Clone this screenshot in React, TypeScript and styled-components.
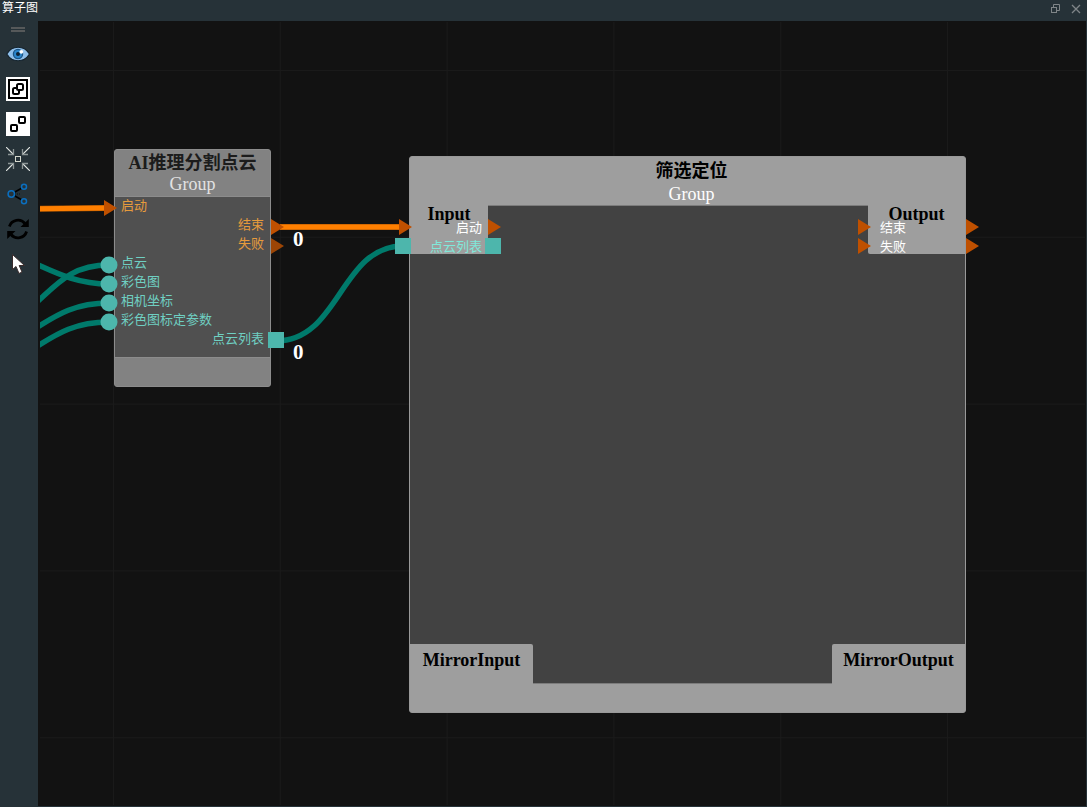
import React from "react";
import styled, { createGlobalStyle } from "styled-components";

const Global = createGlobalStyle`
  *, *::before, *::after { box-sizing: border-box; }
  body { margin: 0; background: #121212; }
  button { border: 0; padding: 0; background: none; color: inherit; font: inherit; }
`;

const SANS = `"Noto Sans CJK SC", "Noto Sans", sans-serif`;
const SERIF = `"Liberation Serif", "Noto Sans CJK SC", serif`;

const Window = styled.div`
  display: flex;
  flex-direction: column;
  height: 100vh;
  background: #263238;
  font-family: ${SANS};
`;

const TitleBar = styled.header`
  display: flex;
  justify-content: space-between;
  align-items: flex-start;
  height: 21px;
  padding: 0 4px 0 2px;
  background: #263238;
`;

const WindowTitle = styled.h1`
  margin: 0;
  font-size: 12px;
  line-height: 13px;
  font-weight: 400;
  color: #fff;
`;

const WindowControls = styled.div`
  display: flex;
  gap: 7px;
  padding-top: 2px;
`;

const ControlButton = styled.button`
  width: 14px;
  height: 14px;
  svg { display: block; }
`;

const Main = styled.div`
  display: flex;
  flex: 1;
  min-height: 0;
`;

const ToolBar = styled.nav`
  display: flex;
  flex-direction: column;
  align-items: center;
  width: 38px;
  padding: 6px 2px 0 0;
  background: #263238;
`;

const Handle = styled.div`
  width: 14px;
  height: 5px;
  margin-bottom: 10px;
  border: solid #56595a;
  border-width: 2px 0;
`;

const ToolButton = styled.button`
  width: 24px;
  height: 24px;
  margin-bottom: 11px;
  svg { display: block; }
`;

const Canvas = styled.main`
  flex: 1;
  min-width: 0;
  padding: 1px;
  background: #121212;
  border: solid #263238;
  border-width: 0 1px 1px 0;
`;

const Viewport = styled.div`
  position: relative;
  height: 100%;
  margin-left: 1px;
  overflow: hidden;
`;

/* Scene coordinates start above and left of the visible part of the graph. */
const Scene = styled.div`
  position: absolute;
  inset: -22px 0 0 -40px;
`;

const Layer = styled.svg`
  position: absolute;
  inset: 0;
  width: 100%;
  height: 100%;
  pointer-events: none;
`;

const Node = styled.section<{ $x: number; $y: number; $w: number; $h: number; $tone: string; $edge: string }>`
  position: absolute;
  left: ${(p) => p.$x}px;
  top: ${(p) => p.$y}px;
  width: ${(p) => p.$w}px;
  height: ${(p) => p.$h}px;
  display: flex;
  flex-direction: column;
  border: 1px solid ${(p) => p.$edge};
  border-radius: 3px;
  background: ${(p) => p.$tone};
`;

const NodeHeader = styled.header<{ $tall?: boolean }>`
  height: ${(p) => (p.$tall ? 48 : 46)}px;
  padding: ${(p) => (p.$tall ? "0 0 0 8px" : "1px 0 0")};
  text-align: center;
  font-family: ${SERIF};
  font-size: 18px;
  line-height: ${(p) => (p.$tall ? 28 : 24)}px;
  color: ${(p) => (p.$tall ? "#000" : "#1c1c1c")};
`;

const NodeTitle = styled.h2`
  margin: 0;
  font-size: 18px;
  line-height: inherit;
  font-weight: 700;
`;

const NodeKind = styled.p<{ $color: string }>`
  margin: 0;
  line-height: 18px;
  color: ${(p) => p.$color};
`;

const NodeBody = styled.div<{ $tone: string }>`
  flex: 1;
  display: flex;
  flex-direction: column;
  background: ${(p) => p.$tone};
`;

const PortBody = styled(NodeBody)`
  border: solid #8c8c8c;
  border-width: 1px 0;
`;

const NodeFooter = styled.footer`
  height: 28px;
`;

const PortList = styled.ul<{ $inset?: number }>`
  margin: 0;
  padding: 0 ${(p) => p.$inset ?? 6}px;
  list-style: none;
`;

const PortLabel = styled.li<{ $color: string; $out?: boolean }>`
  height: 19px;
  font-size: 13px;
  line-height: 16px;
  white-space: nowrap;
  text-align: ${(p) => (p.$out ? "right" : "left")};
  color: ${(p) => p.$color};
`;

const PanelRow = styled.div`
  display: flex;
`;

const Gap = styled.div<{ $side: "top" | "bottom" }>`
  flex: 1;
  border-${(p) => p.$side}: 1px solid #7c7c7c;
`;

const Workspace = styled.div`
  flex: 1;
`;

const Panel = styled.div<{ $w: number; $h: number; $corner: string }>`
  width: ${(p) => p.$w}px;
  height: ${(p) => p.$h}px;
  border-radius: ${(p) => p.$corner};
  background: #9e9e9e;
`;

const PanelTitle = styled.h3<{ $compact?: boolean }>`
  margin: 0;
  padding-top: ${(p) => (p.$compact ? 4 : 0)}px;
  text-align: center;
  font-family: ${SERIF};
  font-size: 18px;
  line-height: ${(p) => (p.$compact ? 10 : 32)}px;
  font-weight: 700;
  color: #000;
`;

const Counter = styled.output<{ $x: number; $y: number }>`
  position: absolute;
  left: ${(p) => p.$x}px;
  top: ${(p) => p.$y}px;
  font-family: ${SERIF};
  font-size: 21px;
  line-height: 24px;
  font-weight: 700;
  color: #fff;
`;

const ORANGE = "#e69b3c";
const TEAL = "#6fcfc2";

const groupPorts = [
  { name: "启动", color: ORANGE },
  { name: "结束", color: ORANGE, out: true },
  { name: "失败", color: ORANGE, out: true },
  { name: "点云", color: TEAL },
  { name: "彩色图", color: TEAL },
  { name: "相机坐标", color: TEAL },
  { name: "彩色图标定参数", color: TEAL },
  { name: "点云列表", color: TEAL, out: true },
];

const triangles = [
  [104, 208, "#bf5000"],
  [271, 227, "#bf5000"],
  [271, 246, "#9c4505"],
  [399, 227, "#bf5000"],
  [488, 227, "#bf5000"],
  [858, 227, "#bf5000"],
  [858, 246, "#bf5000"],
  [966, 227, "#bf5000"],
  [966, 246, "#bf5000"],
] as const;

const circles = [265, 284, 303, 322];
const squares = [[268, 332], [395, 238], [485, 238]];

const tools: { label: string; art: React.ReactNode }[] = [
  {
    label: "显示",
    art: (
      <>
        <path d="M0.800 12C6 3 18 3 23.500 12C18 21 6 21 0.800 12Z" fill="#8fbfea" stroke="#14222c" strokeWidth="1.200" />
        <circle cx="12" cy="12" r="4.600" fill="#2a86cc" stroke="#1b5485" strokeWidth="1.300" />
        <circle cx="12" cy="12" r="2" fill="#0e2233" />
        <circle cx="15.300" cy="9.800" r="1.900" fill="#fff" />
      </>
    ),
  },
  {
    label: "组合",
    art: (
      <>
        <rect width="24" height="24" fill="#fff" />
        <g fill="#fff" stroke="#000" strokeWidth="2">
          <rect x="3" y="3" width="18" height="18" />
          <rect x="7" y="11" width="6" height="6" rx="1.500" />
          <rect x="11" y="7" width="6" height="6" rx="1.500" />
        </g>
      </>
    ),
  },
  {
    label: "取消组合",
    art: (
      <>
        <rect width="24" height="24" fill="#fff" />
        <g fill="#fff" stroke="#000" strokeWidth="2">
          <rect x="5" y="13" width="6" height="6" rx="1" />
          <rect x="13" y="5" width="6" height="6" rx="1" />
        </g>
      </>
    ),
  },
  {
    label: "居中",
    art: (
      <g fill="none">
        <path d="M0 0L7.500 7.500M24 0L16.500 7.500M0 24L7.500 16.500M24 24L16.500 16.500" stroke="#e4e8e5" strokeWidth="1.100" />
        <path d="M7.500 2V7.500H2M16.500 2V7.500H22M7.500 22V16.500H2M16.500 22V16.500H22" stroke="#8d9696" strokeWidth="1.300" />
        <rect x="9.500" y="9.500" width="5" height="5" stroke="#d5d8cd" />
      </g>
    ),
  },
  {
    label: "连接",
    art: (
      <g fill="none">
        <path d="M8 10.500L16 6M8 13.500L16 18" stroke="#000" strokeWidth="1.500" />
        <path d="M9 12H14" stroke="#0b1013" strokeDasharray="1 1" />
        <g stroke="#0a6fc0" strokeWidth="1.500">
          <circle cx="5.300" cy="12" r="3.200" />
          <circle cx="18" cy="4.700" r="2.500" />
          <circle cx="18" cy="19.300" r="2.500" />
        </g>
      </g>
    ),
  },
  {
    label: "刷新",
    art: (
      <>
        <path d="M3.400 9.500A9 8.800 0 0 1 19 6.500M20.600 14.500A9 8.800 0 0 1 5 17.500" fill="none" stroke="#000" strokeWidth="2.800" />
        <path d="M22.800 2V10H14.500ZM1.200 22V14H9.500Z" fill="#000" />
      </>
    ),
  },
  {
    label: "选择",
    art: (
      <path
        d="M6.500 2.500V17.500L10 14.500L13 21.500L16 20L13.200 13.500H18.500Z"
        fill="#fff"
        stroke="#3a2c2c"
        strokeWidth="1"
        strokeLinejoin="round"
      />
    ),
  },
];

export default function App() {
  return (
    <>
      <Global />
      <Window>
        <TitleBar>
          <WindowTitle>算子图</WindowTitle>
          <WindowControls>
            <ControlButton aria-label="还原">
              <svg width="14" height="14" fill="none" stroke="#7f8588">
                <path d="M5.500 5V2.500H11.500V8.500H9" />
                <rect x="3.500" y="5.500" width="5" height="5" />
              </svg>
            </ControlButton>
            <ControlButton aria-label="关闭">
              <svg width="14" height="14" fill="none" stroke="#7f8588" strokeWidth="1.300">
                <path d="M3 3L11 11M11 3L3 11" />
              </svg>
            </ControlButton>
          </WindowControls>
        </TitleBar>
        <Main>
          <ToolBar aria-label="工具栏">
            <Handle />
            {tools.map((tool) => (
              <ToolButton key={tool.label} aria-label={tool.label}>
                <svg width="24" height="24" viewBox="0 0 24 24">{tool.art}</svg>
              </ToolButton>
            ))}
          </ToolBar>
          <Canvas>
            <Viewport>
              <Scene>
                <Layer>
                  <defs>
                    <pattern id="grid" x="113" y="70" width="166.800" height="166.800" patternUnits="userSpaceOnUse">
                      <path d="M0.500 0V167M0 0.500H167" stroke="#1a1a1a" fill="none" />
                    </pattern>
                  </defs>
                  <rect width="100%" height="100%" fill="url(#grid)" />
                  <g fill="none" strokeWidth="6" stroke="#a85403">
                    <path d="M30 209L106 208M280 227H402" />
                  </g>
                  <g fill="none" strokeWidth="5" stroke="#ff7f00">
                    <path d="M30 209L106 208M280 227H402" />
                  </g>
                  <g fill="none" strokeWidth="5.500" stroke="#007a6b">
                    <path d="M36 303C58 283 72 265 109 265" />
                    <path d="M36 264C60 275 80 284 109 284" />
                    <path d="M36 328C58 314 76 303 109 303" />
                    <path d="M36 347C58 333 76 322 109 322" />
                    <path d="M276 341C340 341 340 246 403 246" />
                  </g>
                </Layer>

                <Node $x={114} $y={149} $w={157} $h={238} $tone="#828282" $edge="#8c8c8c">
                  <NodeHeader>
                    <NodeTitle>AI推理分割点云</NodeTitle>
                    <NodeKind $color="#e2e2e2">Group</NodeKind>
                  </NodeHeader>
                  <PortBody $tone="#505050">
                    <PortList>
                      {groupPorts.map((port) => (
                        <PortLabel key={port.name} $color={port.color} $out={port.out}>
                          {port.name}
                        </PortLabel>
                      ))}
                    </PortList>
                  </PortBody>
                  <NodeFooter />
                </Node>

                <Node $x={409} $y={156} $w={557} $h={557} $tone="#9e9e9e" $edge="#999999">
                  <NodeHeader $tall>
                    <NodeTitle>筛选定位</NodeTitle>
                    <NodeKind $color="#fff">Group</NodeKind>
                  </NodeHeader>
                  <NodeBody $tone="#424242">
                    <PanelRow>
                      <Panel $w={78} $h={49} $corner="0 0 2px 0">
                        <PanelTitle $compact>Input</PanelTitle>
                        <PortList>
                          <PortLabel $color="#fff" $out>启动</PortLabel>
                          <PortLabel $color="#80e8da" $out>点云列表</PortLabel>
                        </PortList>
                      </Panel>
                      <Gap $side="top" />
                      <Panel $w={97} $h={49} $corner="0 0 0 2px">
                        <PanelTitle $compact>Output</PanelTitle>
                        <PortList $inset={12}>
                          <PortLabel $color="#fff">结束</PortLabel>
                          <PortLabel $color="#fff">失败</PortLabel>
                        </PortList>
                      </Panel>
                    </PanelRow>
                    <Workspace />
                    <PanelRow>
                      <Panel $w={123} $h={40} $corner="0 2px 0 0">
                        <PanelTitle>MirrorInput</PanelTitle>
                      </Panel>
                      <Gap $side="bottom" />
                      <Panel $w={133} $h={40} $corner="2px 0 0 0">
                        <PanelTitle>MirrorOutput</PanelTitle>
                      </Panel>
                    </PanelRow>
                  </NodeBody>
                  <NodeFooter />
                </Node>

                <Layer>
                  {triangles.map(([x, y, fill]) => (
                    <path key={`${x}-${y}`} d={`M${x} ${y - 8}L${x + 13} ${y}L${x} ${y + 8}Z`} fill={fill} />
                  ))}
                  {circles.map((y) => (
                    <circle key={y} cx="109" cy={y} r="8.500" fill="#4db6ac" />
                  ))}
                  {squares.map(([x, y]) => (
                    <rect key={x} x={x} y={y} width="16" height="16" fill="#4db6ac" />
                  ))}
                </Layer>

                <Counter $x={293} $y={227}>0</Counter>
                <Counter $x={293} $y={340}>0</Counter>
              </Scene>
            </Viewport>
          </Canvas>
        </Main>
      </Window>
    </>
  );
}
